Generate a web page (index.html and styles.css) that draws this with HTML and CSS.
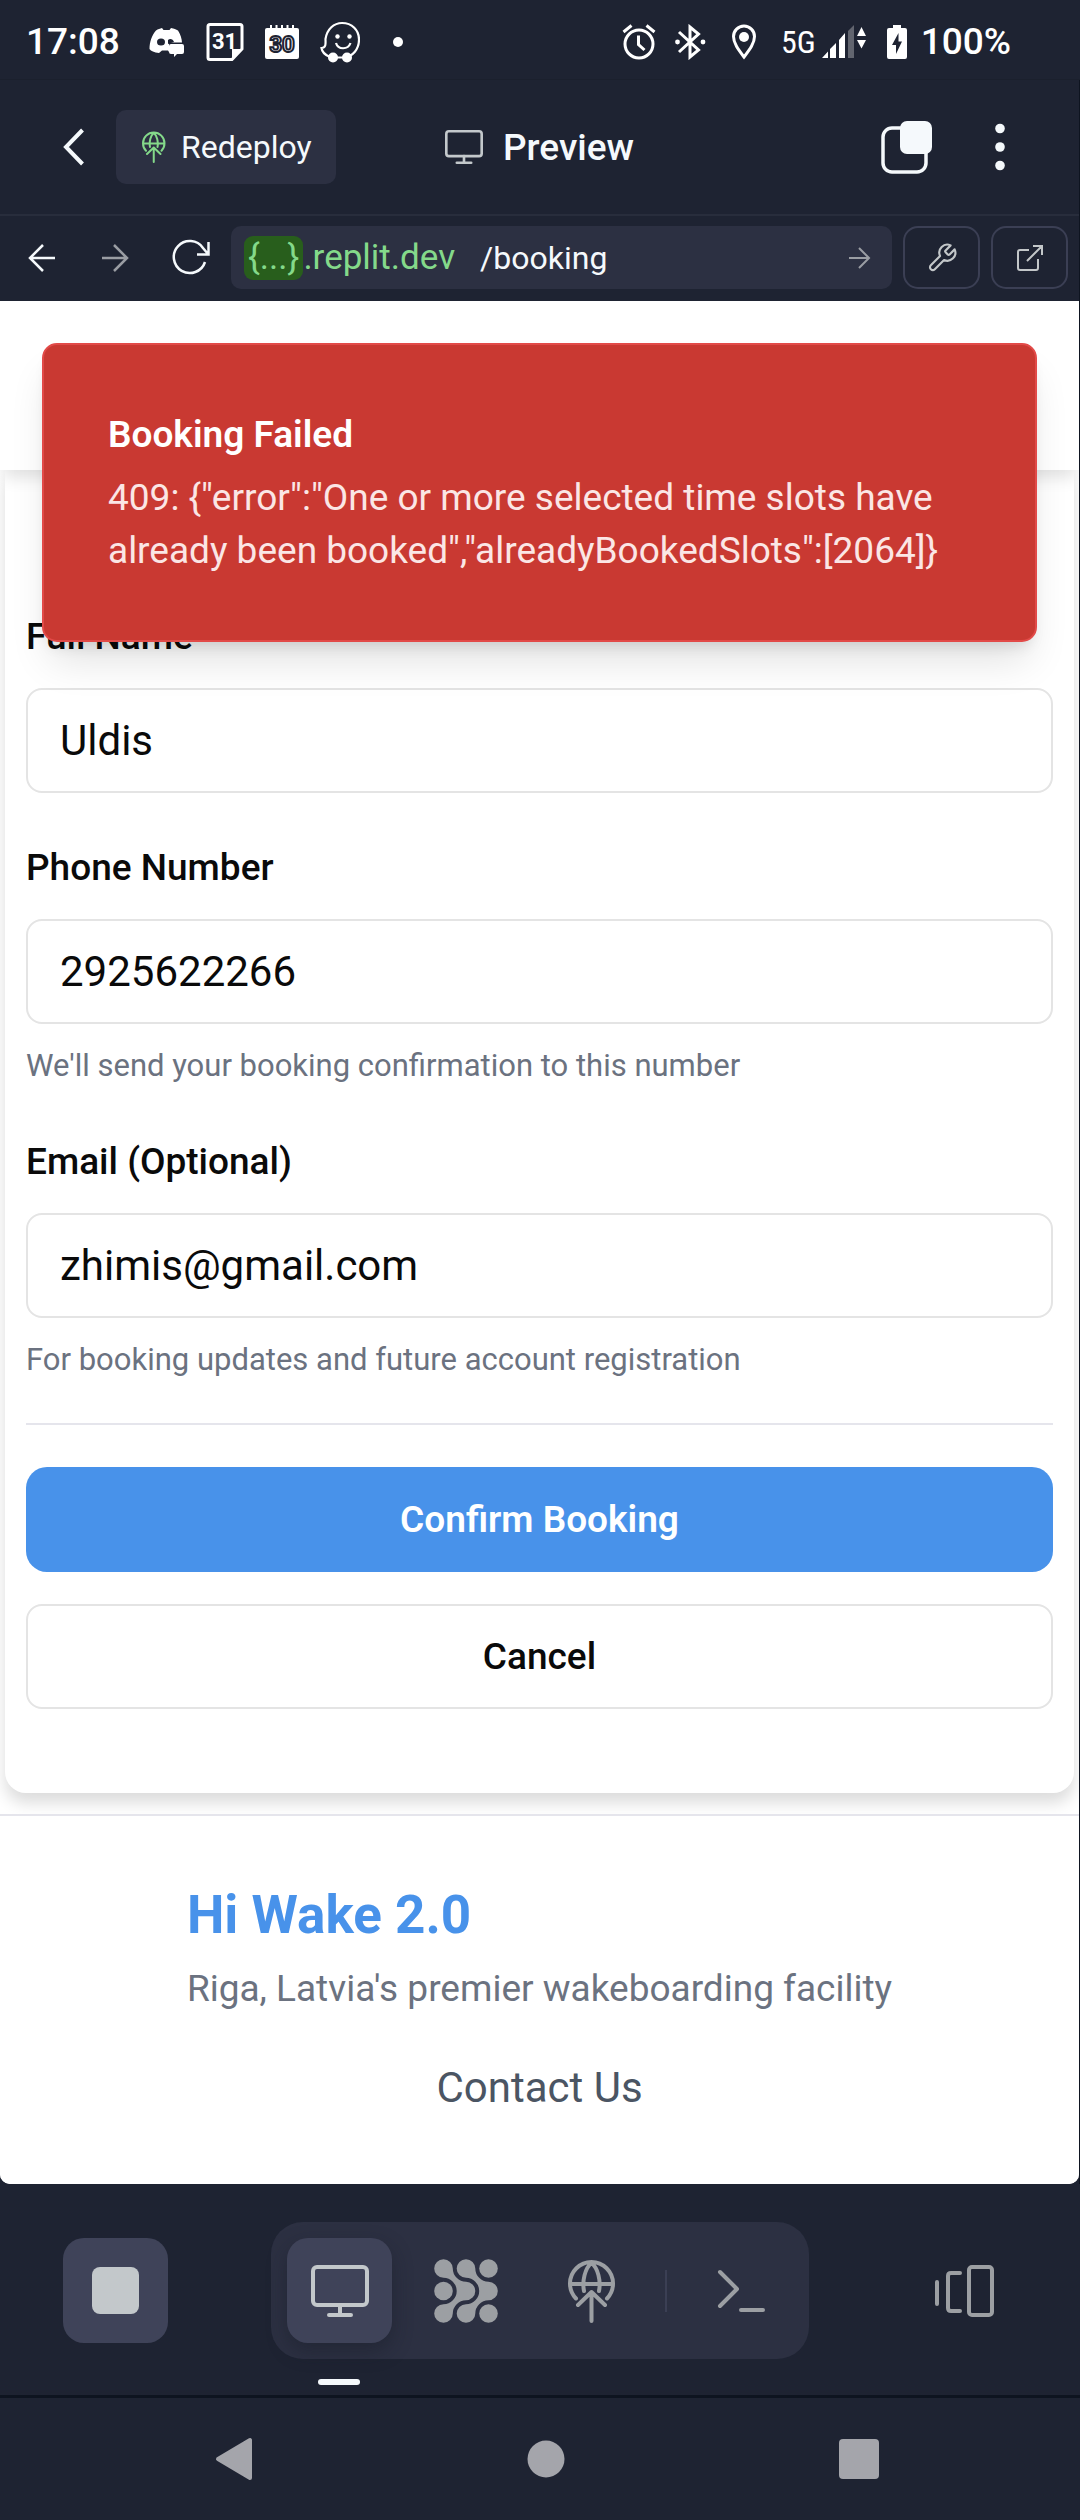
FILE: index.html
```html
<!DOCTYPE html>
<html lang="en">
<head>
<meta charset="utf-8">
<meta name="viewport" content="width=device-width">
<title>Preview</title>
<link rel="stylesheet" href="styles.css">
</head>
<body>
<svg class="sprite" aria-hidden="true">
  <symbol id="deploy" viewBox="0 0 48 64">
    <path d="M8 39.500A21.500 21.500 0 1 1 39 39.500M3 25h41M16 32C14 22 17 9 23.500 4C30 9 33 22 31 32M23.500 62V33M10 46l13.500-13L37 46"/>
  </symbol>
  <symbol id="monitor" viewBox="0 0 58 52">
    <rect x="2" y="2" width="54" height="38" rx="4"/><path d="M29 40v10M18 50h22"/>
  </symbol>
</svg>

<div class="status-bar">
  <div class="status-left">
    <span class="clock">17:08</span>
    <svg width="36" height="30" viewBox="0 0 36 30" fill="#fff"><path d="M7 3.500C9 2 11 1.500 13 1l1.500 2h6L22 1c3 .5 5 1.500 7 2.500 2.500 4 3.800 8 4 12H20v9.500l-1-1.500h-6L10 26C5 25.500 2 24 .5 22 .5 15 3 8 7 3.500z"/><ellipse cx="12" cy="15" rx="4" ry="3.500" fill="#1e2332"/><path d="M19 17v-4c2-2 5-1 6 2z" fill="#1e2332"/><path d="M22 17h11q2 0 2 2v6q0 2-2 2h-5l-3 3v-3h-3q-2 0-2-2v-6q0-2 2-2z"/></svg>
    <svg width="38" height="40" viewBox="0 0 38 40"><path d="M4 2.500h30q2 0 2 2V27L26 37.500H4q-2 0-2-2v-31q0-2 2-2z" fill="none" stroke="#fff" stroke-width="3"/><path d="M36 27l-10 10.500V27z" fill="#fff"/><text class="cal" x="18.500" y="27" text-anchor="middle" fill="#fff">31</text></svg>
    <svg width="34" height="36" viewBox="0 0 34 36"><path d="M2 4h30q2 0 2 2v27q0 2-2 2H2q-2 0-2-2V6q0-2 2-2z" fill="#fff"/><path d="M6 1v4M11.500 1v4M17 1v4M22.500 1v4M28 1v4" stroke="#fff" stroke-width="2"/><text class="cal outlined" x="17" y="28" text-anchor="middle">30</text></svg>
    <svg width="40" height="42" viewBox="0 0 40 42"><path d="M10 36C5 34 2 31 1.500 27c5 0 4-5 4-9C7 8 14 2 22 2c10 0 17 7 17 16.500C39 28 33 35.500 24 36.500H15" fill="none" stroke="#fff" stroke-width="2.200"/><circle cx="17.500" cy="15.500" r="2.200" fill="#fff"/><circle cx="29.500" cy="15.500" r="2.200" fill="#fff"/><path d="M16 22c2 7 12 7 14.500 0" fill="none" stroke="#fff" stroke-width="2.200"/><circle cx="13" cy="36.500" r="5" fill="#fff"/><circle cx="27" cy="36.500" r="5" fill="#fff"/></svg>
    <span class="more-dot"></span>
  </div>
  <div class="status-right">
    <svg width="40" height="36" viewBox="0 0 40 36" fill="none" stroke="#fff" stroke-width="3"><circle cx="20" cy="20" r="14"/><path d="M19.500 11.500v9l6 5.500M4.500 8l8-6.500M35.500 8l-8-6.500"/></svg>
    <svg width="34" height="36" viewBox="0 0 34 36" fill="none" stroke="#fff" stroke-width="3"><path d="M6 8l19.500 18L17 33V3l8.500 7L6 28"/><circle cx="4.500" cy="18" r="2.400" fill="#fff" stroke="none"/><circle cx="30" cy="18" r="2.400" fill="#fff" stroke="none"/></svg>
    <svg width="46" height="36" viewBox="0 0 46 36"><path d="M23 33C17 25 12.500 19 12.500 12.500a10.500 10.500 0 0 1 21 0C33.500 19 29 25 23 33z" fill="none" stroke="#fff" stroke-width="3"/><circle cx="23" cy="13" r="5" fill="#fff"/></svg>
    <span class="network">5G
      <svg width="45" height="36" viewBox="0 0 45 36"><path d="M0 34l6-6.500V34zM8 34v-9l6-6v15zM17 34V16l6-7v25z" fill="#fff"/><path d="M26 34V7l6-6v33z" fill="#62656f"/><path d="M35 12l4.500-9 4.500 9zM35 16h9l-4.500 8.500z" fill="#fff"/></svg>
    </span>
    <svg width="26" height="36" viewBox="0 0 26 36"><path d="M12 1h8v3h4q2 0 2 2v27q0 2-2 2H8q-2 0-2-2V6q0-2 2-2h4z" fill="#fff"/><path d="M17.500 9v8.500H21L15 30v-9h-4z" fill="#1e2332"/></svg>
    <span class="clock">100%</span>
  </div>
</div>

<div class="ide">
  <header class="top-bar">
    <div class="top-left">
      <button class="plain" aria-label="Back"><svg width="22" height="38" viewBox="0 0 22 38" fill="none" stroke="#f5f9fc" stroke-width="4"><path d="M19.500 2L3 19l16.500 17"/></svg></button>
      <button class="redeploy"><svg class="line deploy-small" width="24" height="32"><use href="#deploy"/></svg>Redeploy</button>
    </div>
    <h1 class="view-title"><svg class="line" width="38" height="36"><use href="#monitor"/></svg>Preview</h1>
    <div class="top-right">
      <button class="plain" aria-label="Tabs"><svg width="52" height="54" viewBox="0 0 52 54"><rect x="2" y="8" width="43" height="44" rx="9" fill="none" stroke="#f5f9fc" stroke-width="3.500"/><rect x="19" y="1" width="32" height="33" rx="7" fill="#f5f9fc"/></svg></button>
      <button class="plain" aria-label="Menu"><svg width="10" height="48" viewBox="0 0 10 48" fill="#f5f9fc"><circle cx="5" cy="5.500" r="4.800"/><circle cx="5" cy="24" r="4.800"/><circle cx="5" cy="42.500" r="4.800"/></svg></button>
    </div>
  </header>

  <div class="address-bar">
    <nav class="history">
      <button class="plain" aria-label="Previous page"><svg width="32" height="32" viewBox="0 0 32 32" fill="none" stroke="#f5f9fc" stroke-width="2.500"><path d="M29 16H4M17 3L4 16l13 13"/></svg></button>
      <button class="plain" aria-label="Next page"><svg width="32" height="32" viewBox="0 0 32 32" fill="none" stroke="#9a9da3" stroke-width="2.500"><path d="M3 16h25M15 3l13 13-13 13"/></svg></button>
      <button class="plain" aria-label="Reload"><svg width="38" height="38" viewBox="0 0 38 38" fill="none" stroke="#f5f9fc" stroke-width="2.500"><path d="M33 23A16 16 0 1 1 31 9l5 6M25 15.500h11.500V3"/></svg></button>
    </nav>
    <div class="url">
      <span class="chip">{...}</span><span class="domain">.replit.dev</span>
      <input class="path" type="text" value="/booking" aria-label="Path">
      <button class="plain" aria-label="Go"><svg width="24" height="24" viewBox="0 0 24 24" fill="none" stroke="#9a9da3" stroke-width="2"><path d="M2 12h20M12 2l10 10-10 10"/></svg></button>
    </div>
    <button class="tool" aria-label="Developer tools"><svg width="32" height="32" viewBox="0 0 24 24" fill="none" stroke="#c3c7c9" stroke-width="1.600" stroke-linejoin="round"><path d="M14.700 6.300a1 1 0 0 0 0 1.400l1.600 1.600a1 1 0 0 0 1.400 0l3.770-3.770a6 6 0 0 1-7.940 7.940l-6.910 6.910a2.120 2.120 0 0 1-3-3l6.910-6.910a6 6 0 0 1 7.940-7.940l-3.760 3.760z"/></svg></button>
    <button class="tool" aria-label="Open in new tab"><svg width="28" height="28" viewBox="0 0 28 28" fill="none" stroke="#c3c7c9" stroke-width="2"><path d="M13 6H4q-2 0-2 2v16q0 2 2 2h16q2 0 2-2v-9M11 17L26 2M17 2h9v9"/></svg></button>
  </div>

  <main class="preview">
    <div class="site-header"></div>
    <div class="toast" role="alert">
      <strong class="toast-title">Booking Failed</strong>
      <p class="toast-text">409: {"error":"One or more selected time slots have already been booked","alreadyBookedSlots":[2064]}</p>
    </div>
    <form class="card">
      <div class="fields">
        <div class="field">
          <label for="name">Full Name</label>
          <input id="name" type="text" value="Uldis">
        </div>
        <div class="field">
          <label for="phone">Phone Number</label>
          <input id="phone" type="tel" value="2925622266">
          <p class="hint">We'll send your booking confirmation to this number</p>
        </div>
        <div class="field">
          <label for="email">Email (Optional)</label>
          <input id="email" type="email" value="zhimis@gmail.com">
          <p class="hint">For booking updates and future account registration</p>
        </div>
      </div>
      <div class="actions">
        <button class="confirm" type="button">Confirm Booking</button>
        <button class="cancel" type="button">Cancel</button>
      </div>
    </form>
    <footer class="site-footer">
      <div class="brand">
        <h2>Hi Wake 2.0</h2>
        <p>Riga, Latvia's premier wakeboarding facility</p>
      </div>
      <a class="contact" href="#contact">Contact Us</a>
    </footer>
  </main>
</div>

<nav class="dock">
  <button class="dock-item active" aria-label="Stop"><svg width="47" height="47"><rect width="47" height="47" rx="8" fill="#c3c8cb"/></svg></button>
  <div class="pill">
    <button class="dock-item active current" aria-label="Preview"><svg class="line" width="58" height="52"><use href="#monitor"/></svg></button>
    <button class="dock-item" aria-label="Agent"><svg width="64" height="64" viewBox="0 0 64 64" fill="#9c9fa3"><path id="wave" d="M9.500 .2A9.300 9.300 0 0 1 18.800 9.500A13.200 13.200 0 0 0 32 22.700A9.300 9.300 0 0 1 32 41.300A13.200 13.200 0 0 0 18.800 54.500A9.300 9.300 0 1 1 9.500 45.200A13.200 13.200 0 0 0 9.500 18.800A9.300 9.300 0 0 1 9.500 .2z"/><use href="#wave" x="22.500"/><circle cx="9.500" cy="32" r="9.300"/><circle cx="54.500" cy="9.500" r="9.300"/><circle cx="54.500" cy="54.500" r="9.300"/></svg></button>
    <button class="dock-item" aria-label="Deployments"><svg class="line dim" width="48" height="64"><use href="#deploy"/></svg></button>
    <span class="divider"></span>
    <button class="dock-item" aria-label="Shell"><svg class="line dim" width="48" height="44" viewBox="0 0 48 44"><path d="M3 3l17 17L3 37M24 41h22"/></svg></button>
  </div>
  <button class="dock-item end" aria-label="Switch tabs"><svg class="line dim" width="60" height="52" viewBox="0 0 60 52"><path d="M2 17v22M25 8H16q-3 0-3 3v32q0 3 3 3h9"/><rect x="34" y="2" width="23" height="48" rx="3"/></svg></button>
</nav>

<nav class="system-nav">
  <button class="plain" aria-label="System back"><svg width="37" height="44" viewBox="0 0 37 44"><path d="M35 3v38L3 22z" fill="#a4a5ab" stroke="#a4a5ab" stroke-width="4" stroke-linejoin="round"/></svg></button>
  <button class="plain" aria-label="Home"><svg width="38" height="38"><circle cx="19" cy="19" r="18.500" fill="#a4a5ab"/></svg></button>
  <button class="plain" aria-label="Recent apps"><svg width="40" height="40"><rect width="40" height="40" rx="4" fill="#a4a5ab"/></svg></button>
</nav>
</body>
</html>
```
FILE: styles.css
```css
* { box-sizing: border-box; }

html { background: #1e2332; }

body {
  margin: 0;
  min-height: 100vh;
  display: flex;
  flex-direction: column;
  background: #1e2332;
  color: #0a0a0a;
  font-family: Roboto, "Liberation Sans", sans-serif;
}

h1, h2, p { margin: 0; }
svg { display: block; flex: none; }
button, input { font: inherit; color: inherit; }
button { border: 0; cursor: pointer; }

.sprite { position: absolute; width: 0; height: 0; }
.plain { padding: 0; background: none; }

.line {
  fill: none;
  stroke: #c3c8cb;
  stroke-width: 4;
  stroke-linecap: round;
  stroke-linejoin: round;
}
.dim { stroke: #9c9fa3; }

/* Phone status bar */
.status-bar {
  display: flex;
  justify-content: space-between;
  align-items: center;
  height: 80px;
  padding: 4px 69px 0 26px;
  border-bottom: 1px solid #1b202d;
  color: #fff;
}
.status-left, .status-right { display: flex; align-items: center; }
.status-left { gap: 21px; }
.status-right { gap: 14px; }
.clock { font-size: 37px; font-weight: 500; line-height: 48px; }
.status-left .clock { margin-right: 8px; }
.more-dot { width: 10px; height: 10px; margin-left: 12px; border-radius: 50%; background: #fff; }
.network {
  display: flex;
  align-items: center;
  gap: 6px;
  font-family: "Roboto Condensed", "Liberation Sans Narrow", Roboto, sans-serif;
  font-size: 32px;
}
.cal { font-size: 22px; font-weight: 700; }
.outlined { fill: #fff; stroke: #1e2332; stroke-width: 2; }

/* Editor header */
.ide {
  flex: 1;
  display: flex;
  flex-direction: column;
  border-right: 1px solid #0e1420;
}
.top-bar {
  display: grid;
  grid-template-columns: 1fr auto 1fr;
  align-items: center;
  height: 136px;
  padding: 0 63px;
  border-bottom: 2px solid #282d3c;
  color: #f5f9fc;
}
.top-left { display: flex; align-items: center; gap: 31px; }
.top-right {
  display: flex;
  align-items: center;
  justify-content: flex-end;
  gap: 62px;
  padding-right: 11px;
}
.redeploy {
  display: flex;
  align-items: center;
  gap: 15px;
  height: 74px;
  padding: 0 24px 0 26px;
  border-radius: 10px;
  background: #2c3042;
  font-size: 32px;
}
.deploy-small { stroke: #84d98a; }
.view-title {
  display: flex;
  align-items: center;
  gap: 20px;
  font-size: 37px;
  font-weight: 500;
}

.address-bar {
  display: flex;
  align-items: center;
  gap: 11px;
  padding: 10px 11px 12px 26px;
  color: #f5f9fc;
}
.history { display: flex; align-items: center; gap: 41px; margin-right: 10px; }
.url {
  flex: 1;
  display: flex;
  align-items: center;
  min-width: 0;
  height: 63px;
  padding: 0 21px 0 13px;
  border-radius: 10px;
  background: #2c3042;
  font-size: 32px;
}
.chip, .domain { color: #84d98a; font-size: 35px; }
.chip { padding: 0 4px; border-radius: 9px; background: #285e1c; line-height: 44px; }
.path {
  flex: 1;
  min-width: 0;
  margin-left: 25px;
  padding: 0;
  border: 0;
  outline: 0;
  background: none;
}
.tool {
  display: grid;
  place-items: center;
  width: 77px;
  height: 63px;
  padding: 0;
  border: 2px solid #3b3f54;
  border-radius: 15px;
  background: none;
}

/* Previewed site */
.preview {
  position: relative;
  flex: 1;
  overflow: hidden;
  border-radius: 0 0 10px 10px;
  background: #fff;
}
.site-header {
  position: relative;
  height: 169px;
  background: #fff;
  box-shadow: 0 10px 16px -3px rgba(0, 0, 0, .12);
}
.toast {
  position: absolute;
  top: 42px;
  left: 42px;
  right: 42px;
  display: flex;
  flex-direction: column;
  gap: 10px;
  padding: 63px 64px;
  border: 2px solid #e24a48;
  border-radius: 15px;
  background: #c93932;
  box-shadow: 0 26px 40px -8px rgba(0, 0, 0, .12), 0 10px 16px -8px rgba(0, 0, 0, .14);
  color: #fff;
  font-size: 37px;
  line-height: 53px;
}
.toast-title { font-weight: 600; }
.toast-text { color: #fbe6e5; }

.card {
  margin: 0 5px 21px;
  padding: 137px 21px 84px;
  border-radius: 0 0 21px 21px;
  background: #fff;
  box-shadow: 0 10px 16px 0 rgba(0, 0, 0, .14);
}
.fields { display: flex; flex-direction: column; gap: 45px; }
.field { display: flex; flex-direction: column; gap: 21px; }
.field label { font-size: 37px; font-weight: 500; line-height: 60px; }
.field input {
  height: 105px;
  padding: 0 32px;
  border: 2px solid #e4e4e4;
  border-radius: 16px;
  outline: 0;
  background: #fff;
  font-size: 42px;
}
.hint { color: #6b7280; font-size: 31px; line-height: 42px; }

.actions {
  display: flex;
  flex-direction: column;
  gap: 32px;
  margin-top: 42px;
  padding-top: 42px;
  border-top: 2px solid #e5e5ec;
}
.actions button { height: 105px; font-size: 37px; }
.confirm { border-radius: 21px; background: #4892ea; color: #fff; font-weight: 600; }
.cancel { border: 2px solid #e4e4e4; border-radius: 16px; background: #fff; font-weight: 500; }

.site-footer {
  position: relative;
  display: flex;
  flex-direction: column;
  align-items: center;
  gap: 41px;
  padding: 62px 21px 65px;
  border-top: 2px solid #e5e5ec;
  background: #fff;
}
.brand { display: flex; flex-direction: column; gap: 10px; }
.brand h2 { color: #4892ea; font-size: 53px; line-height: 74px; }
.brand p { color: #6b7280; font-size: 37px; line-height: 53px; }
.contact { color: #4b5563; font-size: 42px; line-height: 63px; text-decoration: none; }

/* Editor dock */
.dock {
  display: grid;
  grid-template-columns: 1fr auto 1fr;
  align-items: center;
  padding: 38px 63px 36px;
}
.dock-item {
  display: grid;
  place-items: center;
  width: 105px;
  height: 105px;
  padding: 0;
  border-radius: 21px;
  background: none;
}
.active { background: #3f4359; }
.end { justify-self: end; }
.pill {
  display: flex;
  align-items: center;
  gap: 21px;
  padding: 16px;
  border-radius: 32px;
  background: #2c3042;
}
.current { position: relative; box-shadow: 0 8px 20px rgba(20, 25, 35, .4); }
.current::after {
  content: "";
  position: absolute;
  top: 141px;
  left: 31px;
  width: 42px;
  height: 6px;
  border-radius: 3px;
  background: #f5f9fc;
}
.divider { width: 2px; height: 42px; background: #3b3f54; }

.system-nav {
  display: flex;
  justify-content: space-between;
  align-items: center;
  height: 126px;
  padding: 0 201px 2px 215px;
  border-top: 3px solid #0e1420;
}
```
